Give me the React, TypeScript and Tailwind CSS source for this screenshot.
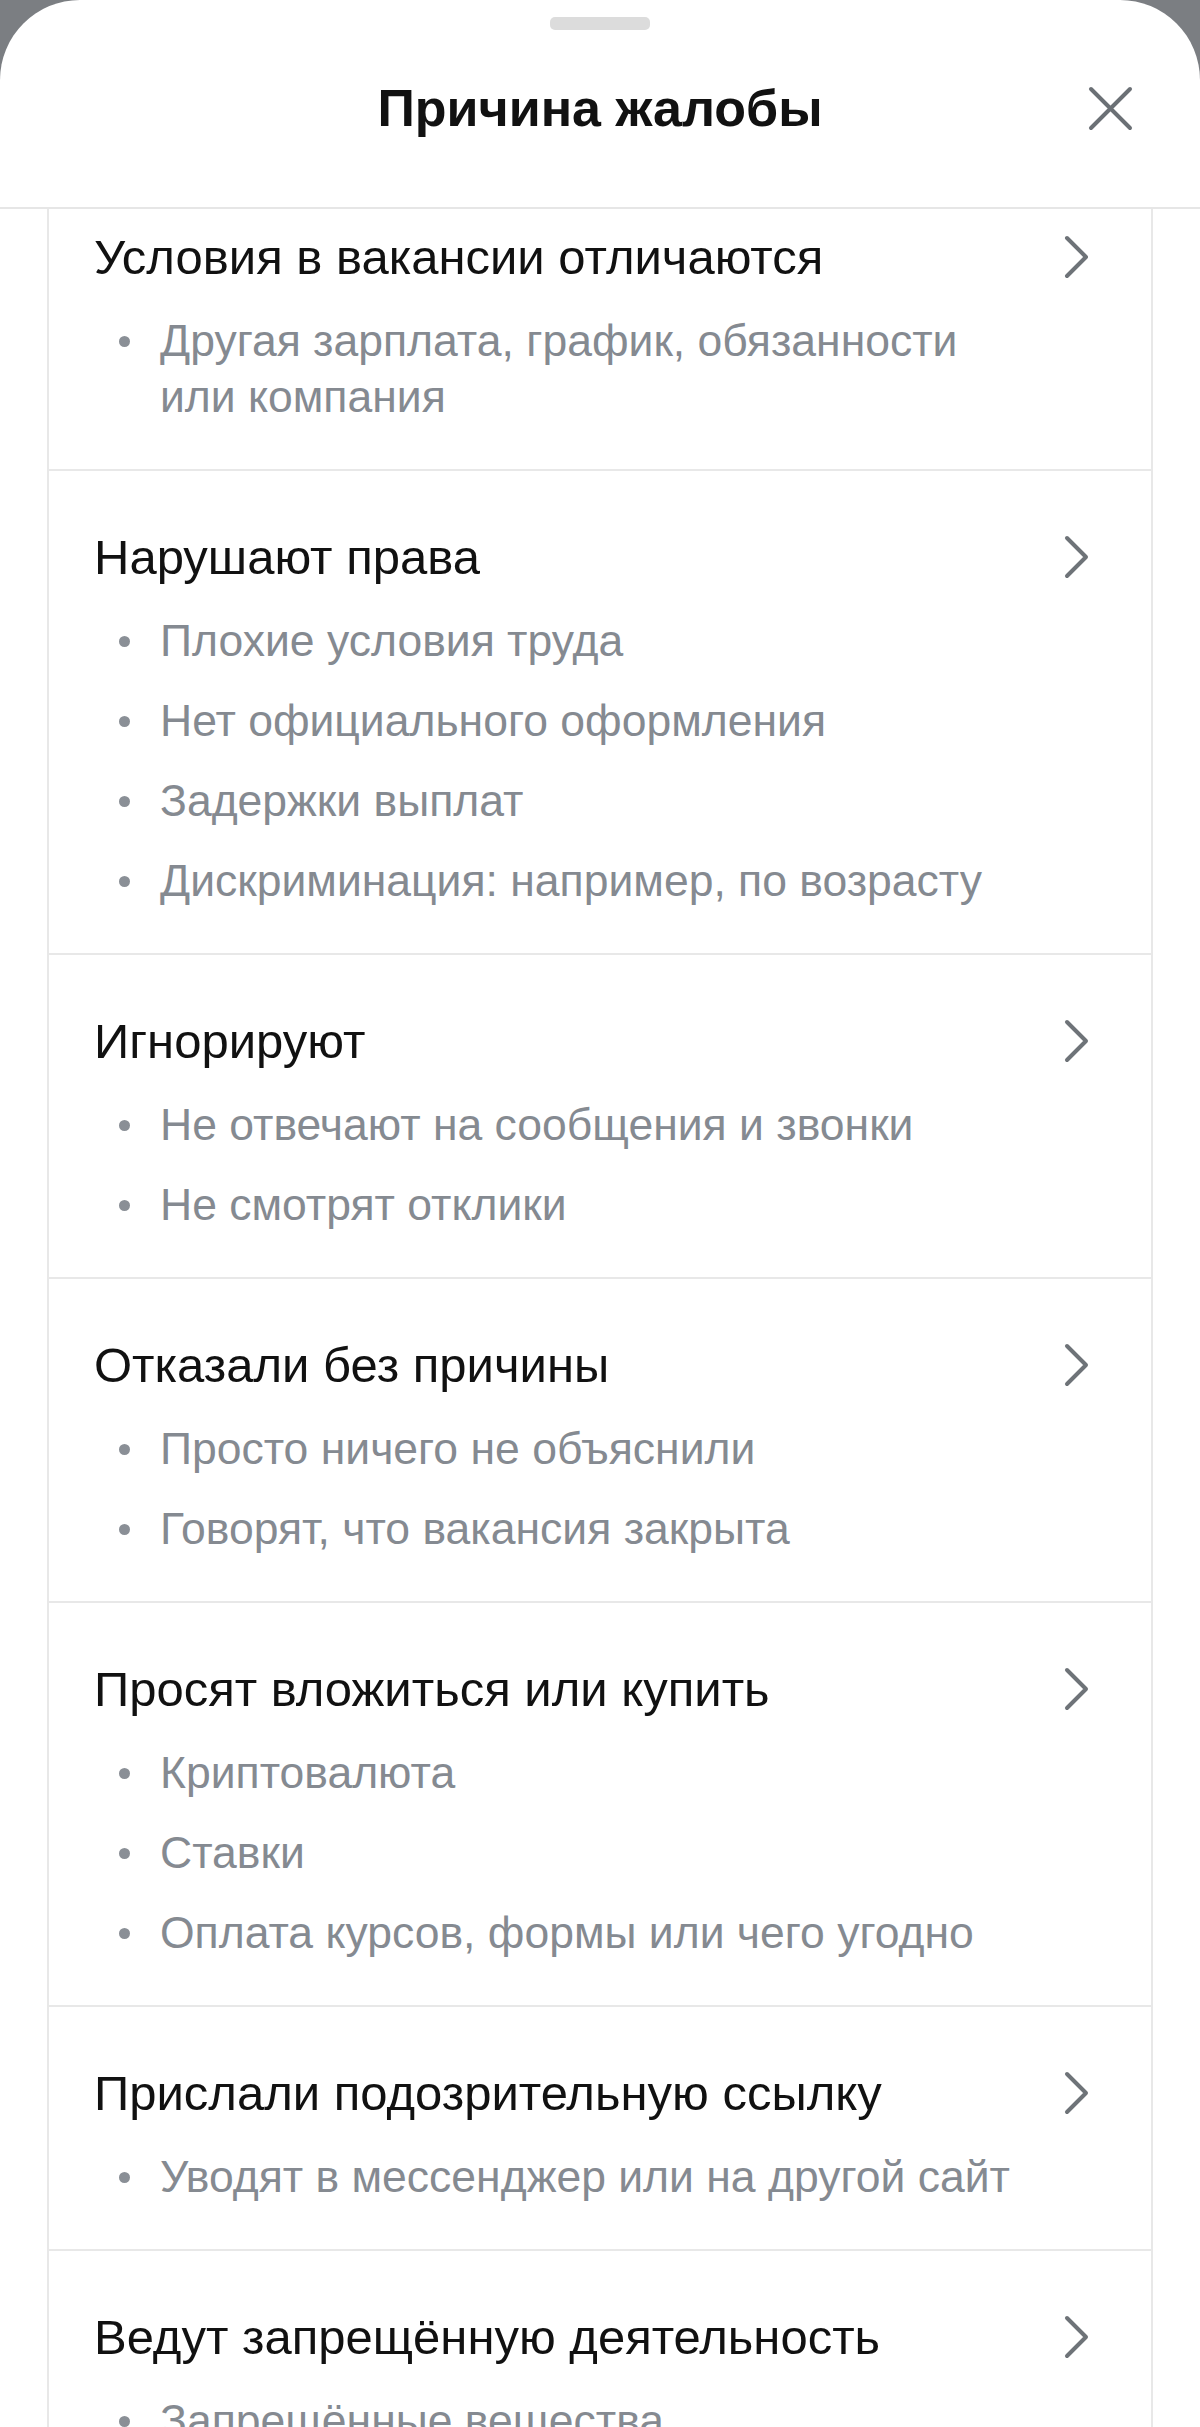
import { FC } from "react";

type Reason = {
    title: string;
    items: string[];
};

const reasons: Reason[] = [
    {
        title: "Условия в вакансии отличаются",
        items: ["Другая зарплата, график, обязанности\nили компания"],
    },
    {
        title: "Нарушают права",
        items: [
            "Плохие условия труда",
            "Нет официального оформления",
            "Задержки выплат",
            "Дискриминация: например, по возрасту",
        ],
    },
    {
        title: "Игнорируют",
        items: ["Не отвечают на сообщения и звонки", "Не смотрят отклики"],
    },
    {
        title: "Отказали без причины",
        items: ["Просто ничего не объяснили", "Говорят, что вакансия закрыта"],
    },
    {
        title: "Просят вложиться или купить",
        items: ["Криптовалюта", "Ставки", "Оплата курсов, формы или чего угодно"],
    },
    {
        title: "Прислали подозрительную ссылку",
        items: ["Уводят в мессенджер или на другой сайт"],
    },
    {
        title: "Ведут запрещённую деятельность",
        items: ["Запрещённые вещества", "Азартные игры"],
    },
];

const ChevronRight = () => (
    <svg width="25" height="44" viewBox="0 0 25 44" fill="none" className="shrink-0">
        <path d="M3 3L22 22L3 41" stroke="#6e7378" strokeWidth="4" strokeLinecap="round" strokeLinejoin="round" />
    </svg>
);

const CloseIcon = () => (
    <svg width="45" height="45" viewBox="0 0 45 45" fill="none">
        <path d="M3 3L42 42M42 3L3 42" stroke="#6b7075" strokeWidth="4" strokeLinecap="round" />
    </svg>
);

const ReasonRow: FC<{ reason: Reason }> = ({ reason }) => (
    <div className="border-b-2 border-[#e8e8e8] pl-[45px] pr-[62px] pt-[58px] pb-[44px] cursor-pointer">
        <div className="flex items-center justify-between">
            <span className="text-[49px] leading-[56px] text-[#111111]">{reason.title}</span>
            <ChevronRight />
        </div>
        <ul className="mt-[28px] flex flex-col gap-[24px]">
            {reason.items.map((item) => (
                <li key={item} className="flex items-start text-[44.5px] leading-[56px] text-[#858a91]">
                    <span className="mt-[23px] mr-[30px] ml-[25px] h-[11px] w-[11px] shrink-0 rounded-full bg-[#8a8f96]" />
                    <span className="whitespace-pre-line">{item}</span>
                </li>
            ))}
        </ul>
    </div>
);

export default function App() {
    return (
        <div className="h-[2427px] w-[1200px] overflow-hidden bg-[#7b7e82] font-['Liberation_Sans',Arial,sans-serif]">
            <div className="flex h-full flex-col rounded-t-[80px] bg-white">
                <div className="flex h-[209px] shrink-0 flex-col items-center border-b-2 border-[#e6e6e6]">
                    <div className="mt-[17px] h-[13px] w-[100px] rounded-[5px] bg-[#dcdcdc]" />
                    <div className="mt-[48px] grid w-full grid-cols-[1fr_auto_1fr] items-center px-[67px]">
                        <span />
                        <h1 className="text-[52px] font-bold leading-[60px] text-[#111111]">Причина жалобы</h1>
                        <button className="justify-self-end">
                            <CloseIcon />
                        </button>
                    </div>
                </div>
                <div className="mx-[47px] flex-1 overflow-hidden border-x-2 border-[#e8e8e8]">
                    <div className="-mt-[38px]">
                        {reasons.map((r) => (
                            <ReasonRow key={r.title} reason={r} />
                        ))}
                    </div>
                </div>
            </div>
        </div>
    );
}
